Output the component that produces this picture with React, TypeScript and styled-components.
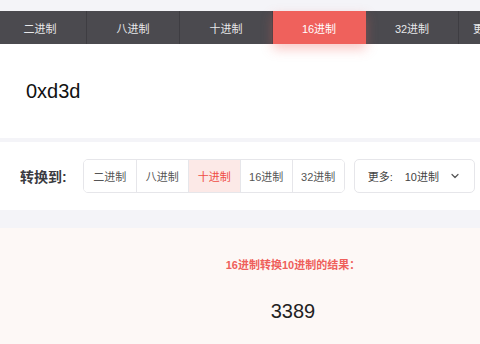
import React from "react";
import styled, { createGlobalStyle } from "styled-components";

const GlobalStyle = createGlobalStyle`
  *, *::before, *::after {
    box-sizing: border-box;
  }
  html, body {
    margin: 0;
    padding: 0;
    background: #f4f4f8;
    font-family: "Liberation Sans", "Noto Sans CJK SC", sans-serif;
    overflow: hidden;
  }
`;

const Page = styled.div`
  padding-top: 11px;
  width: 480px;
  height: 344px;
  overflow: hidden;
`;

const TabBar = styled.nav`
  display: flex;
  height: 33px;
  margin-left: -6px;
  background: #4b4a4f;
`;

const Tab = styled.div<{ $active?: boolean; $more?: boolean }>`
  flex: 0 0 93px;
  display: flex;
  align-items: center;
  justify-content: ${(p) => (p.$more ? "flex-start" : "center")};
  padding-left: ${(p) => (p.$more ? "14px" : "0")};
  font-size: 11px;
  white-space: nowrap;
  color: ${(p) => (p.$active ? "#fff" : "#e8e8ea")};
  background: ${(p) => (p.$active ? "#ef615c" : "transparent")};
  border-right: 1px solid ${(p) => (p.$active ? "#ef615c" : "#3e3d42")};
  box-shadow: ${(p) => (p.$active ? "0 5px 12px rgba(239, 97, 92, 0.35)" : "none")};
  position: relative;
  z-index: ${(p) => (p.$active ? 1 : 0)};
`;

const InputCard = styled.section`
  display: flex;
  align-items: center;
  height: 94px;
  padding-left: 26px;
  background: #fff;
  font-size: 20px;
  color: #111;
  margin-bottom: 4px;
`;

const ConvertRow = styled.section`
  display: flex;
  align-items: center;
  height: 68px;
  padding-left: 20px;
  background: #fff;
  margin-bottom: 18px;
`;

const Label = styled.span`
  font-size: 14px;
  font-weight: bold;
  color: #3a3a40;
  margin-right: 16px;
`;

const Group = styled.div`
  display: flex;
  height: 34px;
  border: 1px solid #e6e6ea;
  border-radius: 5px;
  overflow: hidden;
  margin-right: 9px;
`;

const GroupButton = styled.div<{ $active?: boolean }>`
  width: 52px;
  display: flex;
  align-items: center;
  justify-content: center;
  font-size: 11px;
  color: ${(p) => (p.$active ? "#ef4d45" : "#555")};
  background: ${(p) => (p.$active ? "#fce9e7" : "#fff")};
  border-left: 1px solid #e6e6ea;
  &:first-child {
    border-left: none;
  }
`;

const Select = styled.div`
  display: flex;
  align-items: center;
  width: 121px;
  height: 34px;
  border: 1px solid #e6e6ea;
  border-radius: 5px;
  padding: 0 14px 0 13px;
  font-size: 11px;
  color: #444;
`;

const SelectValue = styled.span`
  margin-left: 12px;
  flex: 1;
`;

const Result = styled.section`
  display: flex;
  flex-direction: column;
  align-items: center;
  background: #fdf8f6;
  height: 140px;
  padding-left: 106px;
`;

const ResultTitle = styled.div`
  margin-top: 28px;
  font-size: 11px;
  font-weight: bold;
  color: #ef5f5b;
`;

const ResultValue = styled.div`
  margin-top: 28px;
  font-size: 20px;
  color: #222;
`;

const tabs = ["二进制", "八进制", "十进制", "16进制", "32进制", "更多"];
const options = ["二进制", "八进制", "十进制", "16进制", "32进制"];

const Chevron = () => (
  <svg width="10" height="10" viewBox="0 0 10 10" fill="none">
    <path d="M2 3.5 L5 6.5 L8 3.5" stroke="#555" strokeWidth="1.2" strokeLinecap="round" strokeLinejoin="round" />
  </svg>
);

export default function App() {
  return (
    <Page>
      <GlobalStyle />
      <TabBar>
        {tabs.map((t) => (
          <Tab key={t} $active={t === "16进制"} $more={t === "更多"}>
            {t}
          </Tab>
        ))}
      </TabBar>
      <InputCard>0xd3d</InputCard>
      <ConvertRow>
        <Label>转换到:</Label>
        <Group>
          {options.map((o) => (
            <GroupButton key={o} $active={o === "十进制"}>
              {o}
            </GroupButton>
          ))}
        </Group>
        <Select>
          <span>更多:</span>
          <SelectValue>10进制</SelectValue>
          <Chevron />
        </Select>
      </ConvertRow>
      <Result>
        <ResultTitle>16进制转换10进制的结果：</ResultTitle>
        <ResultValue>3389</ResultValue>
      </Result>
    </Page>
  );
}
